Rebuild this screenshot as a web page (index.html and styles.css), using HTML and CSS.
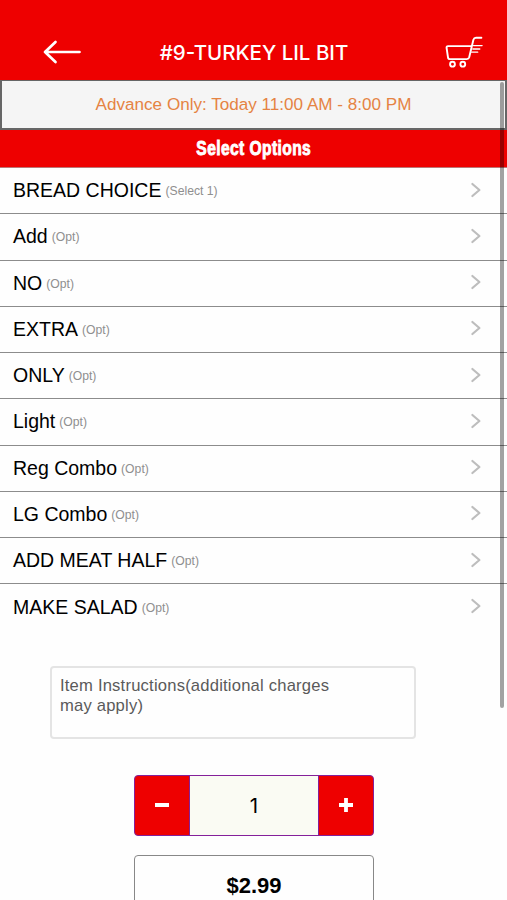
FILE: index.html
```html
<!DOCTYPE html>
<html lang="en">
<head>
<meta charset="utf-8">
<title>#9-Turkey Lil Bit</title>
<link rel="stylesheet" href="styles.css">
</head>
<body>
<header class="topbar">
  <svg class="back" viewBox="0 0 40 28" width="40" height="28"><path d="M37.5 14H3M13.5 4L3 14l10.5 10"/></svg>
  <h1>#9-TURKEY LIL BIT</h1>
  <svg class="cart" viewBox="0 0 40 34" width="40" height="34">
    <path d="M37.4 2.7h-5.4q-2 0-2.6 2L25.2 22.3q-.5 1.8-2.3 1.8H6q-1.8 0-2-1.8L2.6 13q-.3-1.9 1.5-1.9h23.2"/>
    <path class="thin" d="M29.5 10.6h8.6M28.8 14h7M27.7 17.2h6"/>
    <circle cx="8.5" cy="29.2" r="2.4"/><circle cx="18.8" cy="29.2" r="2.4"/>
  </svg>
</header>
<div class="notice"><span>Advance Only: Today 11:00 AM - 8:00 PM</span></div>
<h2 class="section"><span>Select Options</span></h2>
<ul class="options">
  <li><span class="name">BREAD CHOICE</span><small>(Select 1)</small><svg viewBox="0 0 12 16"><path d="M2.4 2l7 6-7 6"/></svg></li>
  <li><span class="name">Add</span><small>(Opt)</small><svg viewBox="0 0 12 16"><path d="M2.4 2l7 6-7 6"/></svg></li>
  <li><span class="name">NO</span><small>(Opt)</small><svg viewBox="0 0 12 16"><path d="M2.4 2l7 6-7 6"/></svg></li>
  <li><span class="name">EXTRA</span><small>(Opt)</small><svg viewBox="0 0 12 16"><path d="M2.4 2l7 6-7 6"/></svg></li>
  <li><span class="name">ONLY</span><small>(Opt)</small><svg viewBox="0 0 12 16"><path d="M2.4 2l7 6-7 6"/></svg></li>
  <li><span class="name">Light</span><small>(Opt)</small><svg viewBox="0 0 12 16"><path d="M2.4 2l7 6-7 6"/></svg></li>
  <li><span class="name">Reg Combo</span><small>(Opt)</small><svg viewBox="0 0 12 16"><path d="M2.4 2l7 6-7 6"/></svg></li>
  <li><span class="name">LG Combo</span><small>(Opt)</small><svg viewBox="0 0 12 16"><path d="M2.4 2l7 6-7 6"/></svg></li>
  <li><span class="name">ADD MEAT HALF</span><small>(Opt)</small><svg viewBox="0 0 12 16"><path d="M2.4 2l7 6-7 6"/></svg></li>
  <li><span class="name">MAKE SALAD</span><small>(Opt)</small><svg viewBox="0 0 12 16"><path d="M2.4 2l7 6-7 6"/></svg></li>
</ul>
<div class="instructions">Item Instructions(additional charges<br>may apply)</div>
<div class="stepper">
  <div class="step"><svg viewBox="0 0 16 16"><path d="M1 8h14"/></svg></div>
  <div class="count">1</div>
  <div class="step"><svg viewBox="0 0 16 16"><path d="M1 8h14M8 1v14"/></svg></div>
</div>
<div class="price">$2.99</div>
<div class="scrollbar"></div>
</body>
</html>
```
FILE: styles.css
```css
* { box-sizing: border-box; }
body {
  margin: 0;
  height: 900px;
  overflow: hidden;
  position: relative;
  background: #fefefe;
  color: #000;
  font-family: "Liberation Sans", Arial, sans-serif;
}
.topbar {
  height: 80px;
  padding: 24px 23px 0 42px;
  display: grid;
  grid-template-columns: 40px 1fr 40px;
  align-items: center;
  background: #ee0000;
}
.topbar svg, .options svg, .step svg { fill: none; stroke: #fff; stroke-linecap: round; stroke-linejoin: round; }
.back { stroke-width: 2.7; }
.cart { stroke-width: 1.9; }
.topbar .thin { stroke-width: 1.3; }
.topbar h1 {
  margin: 1px 0 0 -18px;
  text-align: center;
  color: #fff;
  font: 500 20.5px/28px Inter, sans-serif;
  white-space: nowrap;
}
.notice {
  height: 50px;
  display: flex;
  align-items: center;
  justify-content: center;
  border: 2px solid #666;
  border-top-width: 1px;
  background: #f5f5f5;
  color: #e58343;
  font-size: 17.1px;
}
.section {
  height: 37px;
  margin: 0;
  display: flex;
  align-items: center;
  justify-content: center;
  background: #ee0000;
  color: #fff;
  font-size: 19.5px;
  line-height: 37px;
  letter-spacing: .5px;
  -webkit-text-stroke: 0.9px #fff;
}
.section span { transform: scaleX(.8); }
.options { list-style: none; margin: 0; padding: 0; border-top: 1px solid #b77; }
.options li {
  height: 46.25px;
  padding: 0 25px 0 13px;
  display: flex;
  align-items: center;
  border-bottom: 1px solid #8c8c8c;
  line-height: 45px;
}
.options li:last-child { border-bottom: 0; }
.name { font-size: 19.5px; }
.options small { margin: 2px 0 0 4px; color: #8f8f8f; font-size: 12.2px; }
.options svg { width: 12px; height: 16px; margin: 0 0 2px auto; stroke: #bdbdbd; stroke-width: 2.2; }
.instructions {
  width: 366px;
  height: 73px;
  margin: 35px 0 0 50px;
  padding: 8px 8px;
  border: 2px solid #e4e4e4;
  border-radius: 4px;
  color: #5a5a5a;
  font-size: 16.6px;
  line-height: 20px;
  letter-spacing: .2px;
}
.stepper {
  width: 240px;
  height: 61px;
  margin: 36px 0 0 134px;
  display: grid;
  grid-template-columns: 54px 130px 54px;
  overflow: hidden;
  border: 1px solid #84209a;
  border-radius: 4px;
  background: #ee0000;
}
.step { display: grid; place-items: center; }
.step svg { width: 16px; height: 16px; stroke-width: 3.8; stroke-linecap: butt; }
.count {
  border: solid #84209a;
  border-width: 0 1px;
  background: #fafbf3;
  text-align: center;
  font: 20.5px/59px Inter, sans-serif;
}
.price {
  width: 240px;
  height: 62px;
  margin: 19px 0 0 134px;
  border: 1px solid #888;
  border-radius: 4px;
  text-align: center;
  font-size: 22px;
  font-weight: bold;
  line-height: 60px;
}
.scrollbar {
  position: absolute;
  top: 82px;
  right: 3px;
  width: 4px;
  height: 626px;
  border-radius: 2px;
  background: rgba(0, 0, 0, .36);
}
```
